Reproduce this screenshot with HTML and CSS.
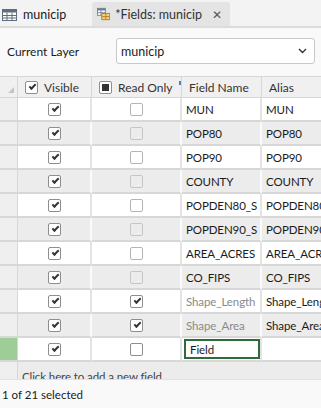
FILE: index.html
```html
<!DOCTYPE html>
<html lang="en">
<head>
  <meta charset="UTF-8" />
  <meta name="viewport" content="width=device-width, initial-scale=1" />
  <title>Fields: municip</title>
  <link rel="stylesheet" href="styles.css">
</head>
<body>
  <div class="pane">

    <nav class="tabs">
      <div class="tab">
        <svg class="tab-icon" width="15" height="13" viewBox="0 0 15 13">
          <rect x="0.5" y="1.5" width="14" height="11" fill="#fff" stroke="#5f6f80"/>
          <rect x="0.5" y="1.5" width="14" height="3" fill="#5f6f80"/>
          <path d="M0.5 7.5H14.5M0.5 10H14.5M5 4.5V12.5M10 4.5V12.5" stroke="#5f6f80" fill="none"/>
        </svg>
        <span>municip</span>
      </div>
      <div class="tab active">
        <svg class="tab-icon" width="15" height="14" viewBox="0 0 15 14">
          <rect x="0.5" y="0.5" width="9" height="8" fill="#fff" stroke="#6f7f90"/>
          <rect x="0.5" y="0.5" width="9" height="2.5" fill="#6f7f90"/>
          <path d="M0.5 5.5H9.5M4.5 3V8.5" stroke="#6f7f90" fill="none"/>
          <rect x="5.5" y="6.5" width="9" height="7" fill="#f7d27a" stroke="#b07a20"/>
          <path d="M5.5 10H14.5M10 6.5V13.5" stroke="#b07a20" fill="none"/>
        </svg>
        <span>*Fields: municip</span>
        <span class="close">✕</span>
      </div>
    </nav>

    <div class="layer-row">
      <label class="layer-label" for="layer">Current Layer</label>
      <div class="select" id="layer">
        <span>municip</span>
        <svg width="9" height="6" viewBox="0 0 9 6"><path d="M1 1L4.5 4.5L8 1" stroke="#333" stroke-width="1.4" fill="none"/></svg>
      </div>
    </div>

    <div class="grid" id="grid">
      <div class="corner"><span class="tri"></span></div>
      <div class="hcell"><span class="cb checked"></span>Visible</div>
      <div class="hcell"><span class="cb mixed"></span>Read Only<span class="sort"></span></div>
      <div class="hcell">Field Name</div>
      <div class="hcell">Alias</div>
    </div>

    <footer class="status">1 of 21 selected</footer>
  </div>

  <script>
    (function(){
      const rows = [
        ['MUN', 'MUN', false],
        ['POP80', 'POP80', false],
        ['POP90', 'POP90', false],
        ['COUNTY', 'COUNTY', false],
        ['POPDEN80_S', 'POPDEN80_S', false],
        ['POPDEN90_S', 'POPDEN90_S', false],
        ['AREA_ACRES', 'AREA_ACRES', false],
        ['CO_FIPS', 'CO_FIPS', false],
        ['Shape_Length', 'Shape_Length', true],
        ['Shape_Area', 'Shape_Area', true]
      ];
      const grid = document.getElementById('grid');
      let html = '';
      rows.forEach((r, i) => {
        const cls = i % 2 ? 'row alt' : 'row';
        html += '<div class="' + cls + ' rh"></div>' +
          '<div class="' + cls + ' cell center"><span class="cb checked"></span></div>' +
          '<div class="' + cls + ' cell center"><span class="cb' + (r[2] ? ' checked' : ' ro') + '"></span></div>' +
          '<div class="' + cls + ' cell' + (r[2] ? ' dim' : '') + '">' + r[0] + '</div>' +
          '<div class="' + cls + ' cell">' + r[1] + '</div>';
      });
      html += '<div class="row rh editing"></div>' +
        '<div class="row cell center"><span class="cb checked"></span></div>' +
        '<div class="row cell center"><span class="cb"></span></div>' +
        '<div class="row cell"><span class="edit">Field</span></div>' +
        '<div class="row cell"></div>';
      html += '<div class="row alt rh"></div>' +
        '<div class="row alt cell add">Click here to add a new field.</div>';
      grid.insertAdjacentHTML('beforeend', html);
    })();
  </script>
</body>
</html>
```

FILE: styles.css
```css
:root {
  --bg: #f9f9f9;
  --text: #1b1b1b;
  --muted: #8a8a8a;
  --line: #d7d7d7;
  --line-soft: #e4e4e4;
  --alt: #ececec;
  --tab: #e4e4e4;
  --green: #2e6b38;
  --green-soft: #9fcd98;
  --font: Lato, 'Noto Sans', sans-serif;
}

*, *::before, *::after {
  box-sizing: border-box;
}
body {
  margin: 0;
  font-family: var(--font);
  font-size: 12px;
  color: var(--text);
  background: var(--bg);
}

.pane {
  width: 321px;
  height: 408px;
  overflow: hidden;
  display: flex;
  flex-direction: column;
}

/* tabs */
.tabs {
  display: flex;
  height: 28px;
  align-items: flex-end;
  border-bottom: 2px solid #dcdcdc;
  background: #f3f3f3;
  flex-shrink: 0;
}
.tab {
  display: flex;
  align-items: center;
  gap: 6px;
  height: 24px;
  padding: 0 8px 0 2px;
  font-size: 12.5px;
  width: 92px;
  white-space: nowrap;
}
.tab.active {
  background: var(--tab);
  border-radius: 3px 3px 0 0;
  padding: 0 8px 0 5px;
  width: 138px;
  gap: 5px;
  color: #333;
}
.tab .close {
  margin-left: 5px;
  font-size: 12px;
  color: #555;
}

/* current layer */
.layer-row {
  display: flex;
  align-items: center;
  height: 48px;
  padding: 0 6px 2px 7px;
  flex-shrink: 0;
}
.layer-label {
  width: 109px;
  font-size: 12px;
}
.select {
  flex: 1;
  height: 26px;
  border: 1px solid #c8c8c8;
  border-radius: 3px;
  background: #fff;
  display: flex;
  align-items: center;
  justify-content: space-between;
  padding: 0 7px 0 4px;
  font-size: 12.5px;
}

/* grid */
.grid {
  display: grid;
  grid-template-columns: 18px 74px 90px 80px 80px;
  grid-auto-rows: 24px;
  grid-template-rows: 21px;
  flex: 1;
  min-height: 0;
  overflow: hidden;
  border-top: 1px solid var(--line);
  background: #fff;
}
.corner,
.hcell {
  background: #f0f0f0;
  border-right: 1px solid var(--line);
  border-bottom: 1px solid var(--line);
  display: flex;
  align-items: center;
  white-space: nowrap;
  overflow: hidden;
  color: #333;
  font-size: 12px;
}
.hcell {
  padding-left: 7px;
  gap: 6px;
  position: relative;
}
.corner {
  position: relative;
}
.tri {
  position: absolute;
  left: 8px;
  bottom: 4px;
  width: 0;
  height: 0;
  border-left: 6px solid transparent;
  border-bottom: 6px solid #c4c4c4;
}
.sort {
  position: absolute;
  right: 0;
  top: 4px;
  width: 2px;
  height: 4px;
  background: #4a7fc1;
}

.row {
  border-bottom: 2px solid var(--line);
  border-right: 2px solid var(--line-soft);
  background: #fff;
}
.row.alt {
  background: var(--alt);
  border-right-color: #fafafa;
}
.rh {
  background: #efefef;
  border-right: 1px solid var(--line);
}
.row.alt.rh {
  background: #efefef;
  border-right-color: var(--line);
}
.rh.editing {
  background: var(--green-soft);
}
.cell {
  display: flex;
  align-items: center;
  padding-left: 4px;
  white-space: nowrap;
  overflow: hidden;
  font-size: 11.5px;
  letter-spacing: -0.1px;
}
.cell.center {
  justify-content: center;
  padding-left: 0;
}
.cell.dim {
  color: var(--muted);
}
.cell.add {
  grid-column: 2 / 6;
  color: #444;
  padding: 6px 0 0 4px;
}
.edit {
  display: flex;
  align-items: center;
  width: 76px;
  height: 20px;
  margin-left: -2px;
  padding-left: 4px;
  border: 2px solid var(--green);
  background: #fff;
}

/* checkboxes */
.cb {
  display: inline-block;
  width: 13px;
  height: 13px;
  border: 1px solid #8e8e8e;
  border-radius: 2px;
  background: #fff;
  position: relative;
  flex-shrink: 0;
}
.cb.ro {
  border-color: #b4b4b4;
  background: transparent;
}
.alt .cb.ro {
  border-color: #c6c6c6;
}
.cb.checked::after {
  content: '';
  position: absolute;
  left: 3px;
  top: 2px;
  width: 7px;
  height: 4px;
  border-left: 2px solid #333;
  border-bottom: 2px solid #333;
  transform: rotate(-45deg);
}
.cb.mixed::after {
  content: '';
  position: absolute;
  inset: 2px;
  background: #333;
}

.status {
  height: 29px;
  flex-shrink: 0;
  display: flex;
  align-items: center;
  padding-left: 2px;
  font-size: 11.5px;
  background: var(--bg);
  border-top: 1px solid #e2e2e2;
}
```
